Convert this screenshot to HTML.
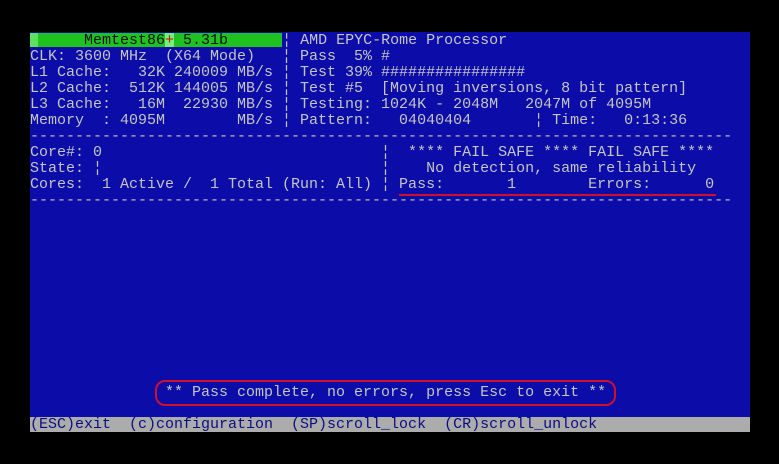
<!DOCTYPE html>
<html><head><meta charset="utf-8"><style>
html,body{margin:0;padding:0;background:#000;width:779px;height:464px;overflow:hidden}
#scr{position:absolute;left:30px;top:32px;width:720px;height:400px;background:#0c0ca8}
pre{margin:0;font-family:"Liberation Mono",monospace;font-size:15px;line-height:16px;color:#c4c4c4;position:absolute;left:0;top:1px;white-space:pre}
.g{position:absolute;left:0;top:1px;width:252px;height:14px;background:#1fc21f}
.g1{position:absolute;left:0;top:1px;width:8px;height:14px;background:#5ee05e}
.g2{position:absolute;left:135px;top:1px;width:9px;height:14px;background:#7aee7a}
.foot{position:absolute;left:0;top:385px;width:720px;height:15px;background:#acacac}
.ul{position:absolute;left:369px;top:162px;width:317px;height:2px;background:#d0102a}
.box{position:absolute;left:125px;top:348px;width:457px;height:22px;border:2px solid #d0102a;border-radius:10px}
</style></head><body>
<div id="scr">
<div class="g"></div><div class="g1"></div><div class="g2"></div>
<div class="foot"></div>
<pre><span style="color:#111">      Memtest86</span><span style="color:#c01010">+</span><span style="color:#111"> 5.31b</span>      ¦ AMD EPYC-Rome Processor
CLK: 3600 MHz  (X64 Mode)   ¦ Pass  5% #
L1 Cache:   32K 240009 MB/s ¦ Test 39% ################
L2 Cache:  512K 144005 MB/s ¦ Test #5  [Moving inversions, 8 bit pattern]
L3 Cache:   16M  22930 MB/s ¦ Testing: 1024K - 2048M   2047M of 4095M
Memory  : 4095M        MB/s ¦ Pattern:   04040404       ¦ Time:   0:13:36
------------------------------------------------------------------------------
Core#: 0                               ¦  **** FAIL SAFE **** FAIL SAFE ****
State: ¦                               ¦    No detection, same reliability
Cores:  1 Active /  1 Total (Run: All) ¦ Pass:       1        Errors:      0
------------------------------------------------------------------------------











               ** Pass complete, no errors, press Esc to exit **

<span style="color:#0c0c80">(ESC)exit  (c)configuration  (SP)scroll_lock  (CR)scroll_unlock</span></pre>
<div class="ul"></div>
<div class="box"></div>
</div>
</body></html>
